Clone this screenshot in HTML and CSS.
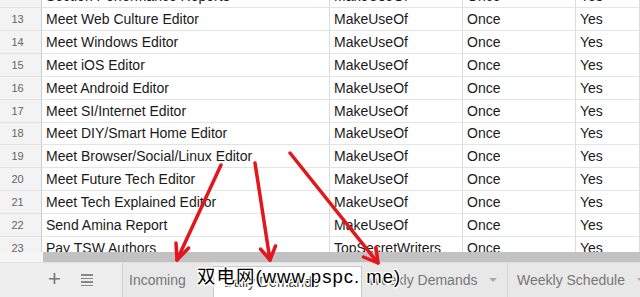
FILE: index.html
```html
<!DOCTYPE html>
<html lang="en">
<head>
    <meta charset="UTF-8">
    <title>Sheet tabs</title>
    <link rel="stylesheet" href="styles.css">
</head>
<body>
    <div class="app">
        <div class="sheet">
            <div class="grid" id="grid"></div>
        </div>
        <div class="hscroll">
            <div class="corner"></div>
            <div class="thumb"></div>
        </div>
        <div class="tabbar">
            <div class="tools">
                <span class="plus">+</span>
                <span class="list"><i></i><i></i><i></i><i></i></span>
            </div>
            <div class="tab incoming">Incoming</div>
            <div class="tab active">Daily Demands</div>
            <div class="tab demands">Weekly Demands <span class="caret"></span></div>
            <div class="tab schedule">Weekly Schedule <span class="caret"></span></div>
        </div>

        <svg class="arrows" width="640" height="297" viewBox="0 0 640 297">
            <g stroke="#e3161b" stroke-width="3.5" stroke-linecap="round" stroke-linejoin="round" fill="none">
                <path d="M221 165 L177 260"/>
                <path d="M188.6 248 L177 260 L176 243"/>
                <path d="M255 163 L270 260"/>
                <path d="M275.5 246 L270 260 L260.5 249"/>
                <path d="M290 153 L378 263"/>
                <path d="M376 247.5 L378 263 L363.5 257"/>
            </g>
        </svg>
        <div class="watermark">双电网(www.pspc. me)</div>
    </div>

    <script>
        const rows = [
            [12, 'Section Performance Reports', 'MakeUseOf', 'Once', 'Yes'],
            [13, 'Meet Web Culture Editor', 'MakeUseOf', 'Once', 'Yes'],
            [14, 'Meet Windows Editor', 'MakeUseOf', 'Once', 'Yes'],
            [15, 'Meet iOS Editor', 'MakeUseOf', 'Once', 'Yes'],
            [16, 'Meet Android Editor', 'MakeUseOf', 'Once', 'Yes'],
            [17, 'Meet SI/Internet Editor', 'MakeUseOf', 'Once', 'Yes'],
            [18, 'Meet DIY/Smart Home Editor', 'MakeUseOf', 'Once', 'Yes'],
            [19, 'Meet Browser/Social/Linux Editor', 'MakeUseOf', 'Once', 'Yes'],
            [20, 'Meet Future Tech Editor', 'MakeUseOf', 'Once', 'Yes'],
            [21, 'Meet Tech Explained Editor', 'MakeUseOf', 'Once', 'Yes'],
            [22, 'Send Amina Report', 'MakeUseOf', 'Once', 'Yes'],
            [23, 'Pay TSW Authors', 'TopSecretWriters', 'Once', 'Yes']
        ];

        const grid = document.getElementById('grid');
        rows.forEach(row => {
            const tr = document.createElement('div');
            tr.className = 'row';
            row.forEach((value, i) => {
                const cell = document.createElement('div');
                cell.className = i === 0 ? 'cell head' : 'cell';
                cell.textContent = value;
                tr.appendChild(cell);
            });
            grid.appendChild(tr);
        });
    </script>
</body>
</html>
```

FILE: styles.css
```css
body {
    margin: 0;
    background: #fff;
    font-family: "Liberation Sans", Arial, sans-serif;
    overflow: hidden;
}

.app {
    position: relative;
    width: 640px;
    height: 297px;
    display: flex;
    flex-direction: column;
}

.sheet {
    height: 252px;
    overflow: hidden;
}

.grid {
    margin-top: -14.5px;
}

.row {
    display: grid;
    grid-template-columns: 42px 288px 133px 113px 1fr;
    height: 22.85px;
}

.cell {
    box-sizing: border-box;
    display: flex;
    align-items: center;
    padding-left: 4px;
    font-size: 14px;
    color: #1a1a1a;
    white-space: nowrap;
    overflow: hidden;
    border-bottom: 1px solid #e4e4e4;
    border-right: 1px solid #dcdcdc;
}

.cell.head {
    justify-content: center;
    padding: 0 6px 0 0;
    font-size: 11px;
    color: #666;
    background: #f3f3f3;
    border-right: 1px solid #c9ced6;
    border-bottom: 1px solid #e2e2e2;
}

.hscroll {
    display: flex;
    height: 10px;
}

.corner {
    width: 43px;
    background: #f6f6f6;
}

.thumb {
    flex: 1;
    background: #c2c2c2;
}

.tabbar {
    display: flex;
    height: 35px;
    background: #eeeeee;
    border-top: 1px solid #e0e0e0;
    box-sizing: border-box;
    font-size: 14px;
    color: #777;
}

.tools {
    width: 122px;
    display: flex;
    align-items: center;
    padding-left: 48px;
    box-sizing: border-box;
    gap: 20px;
}

.plus {
    font-size: 22px;
    line-height: 1;
    color: #777;
    margin-top: -2px;
}

.list {
    display: flex;
    flex-direction: column;
    gap: 2px;
    width: 12px;
}

.list i {
    height: 1.5px;
    background: #888;
}

.tab {
    display: flex;
    align-items: center;
    box-sizing: border-box;
    background: #e8e8e8;
    border-left: 1px solid #d2d2d2;
    white-space: nowrap;
    overflow: hidden;
}

.incoming {
    width: 91px;
    padding-left: 6px;
}

.active {
    width: 149px;
    margin-top: 3px;
    padding-left: 10px;
    background: #fff;
    border: 1px solid #c8c8c8;
    border-bottom: none;
    color: #444;
}

.demands {
    width: 145px;
    padding-left: 6px;
    border-left: none;
}

.schedule {
    flex: 1;
    padding-left: 9px;
    border-left: 1px solid #d2d2d2;
}

.caret {
    width: 0;
    height: 0;
    margin-left: 12px;
    border-left: 4px solid transparent;
    border-right: 4px solid transparent;
    border-top: 4px solid #aaa;
}

.arrows {
    position: absolute;
    top: 0;
    left: 0;
    pointer-events: none;
}

.watermark {
    position: absolute;
    left: 197px;
    top: 262px;
    font-size: 18.5px;
    letter-spacing: 1px;
    color: #000;
    font-family: "Liberation Sans", "Noto Sans CJK SC", sans-serif;
    text-shadow: 1px 1px 0 #fff, -1px -1px 0 #fff, 1px -1px 0 #fff, -1px 1px 0 #fff, 0 1.5px 0 #fff, 0 -1.5px 0 #fff;
    white-space: nowrap;
}
```
